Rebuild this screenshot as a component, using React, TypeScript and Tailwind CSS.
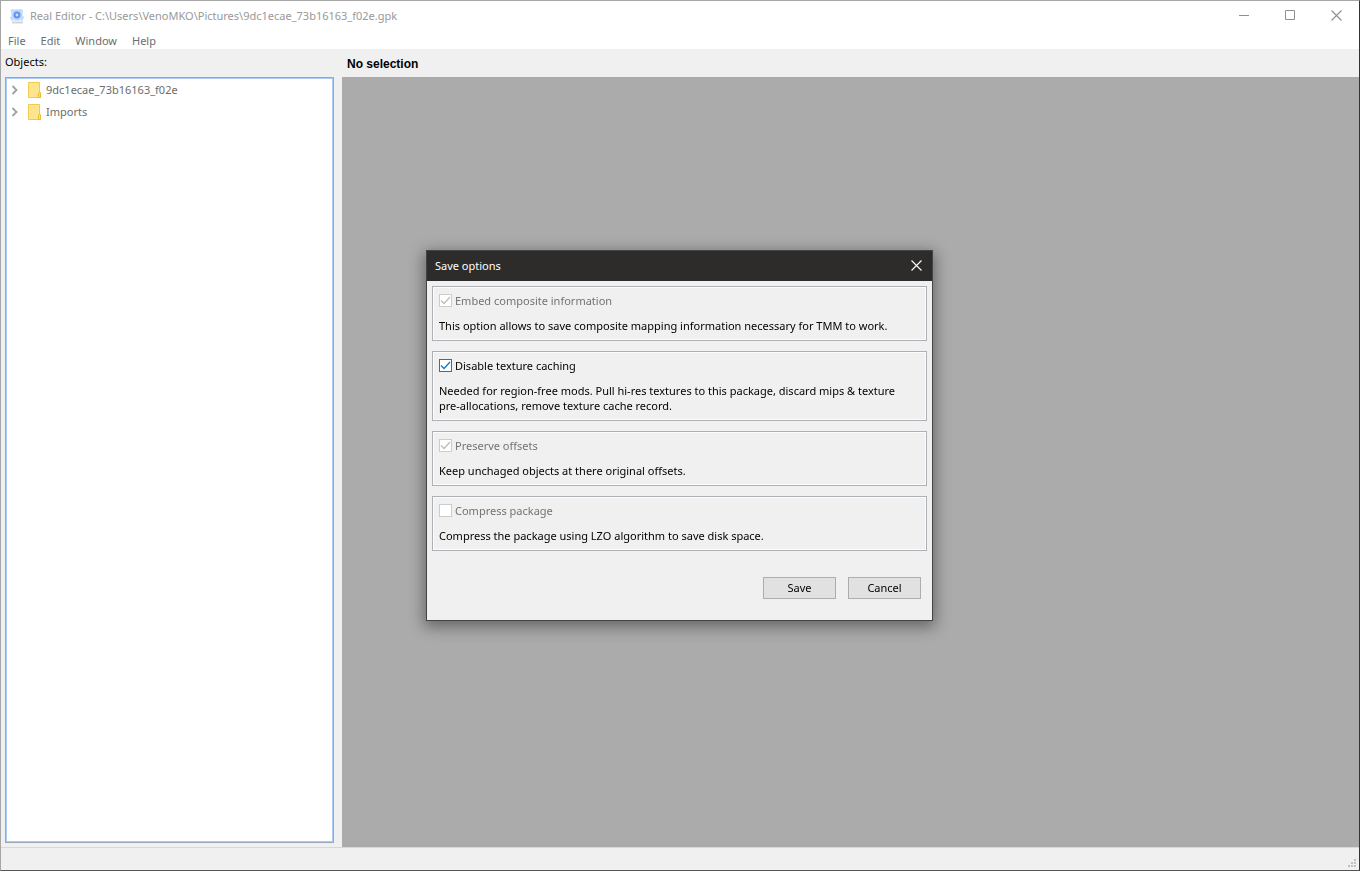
import { useState } from "react";

type SaveOption = {
  id: string;
  label: string;
  description: string;
  checked: boolean;
  disabled: boolean;
};

const initialOptions: SaveOption[] = [
  {
    id: "embed",
    label: "Embed composite information",
    description: "This option allows to save composite mapping information necessary for TMM to work.",
    checked: true,
    disabled: true,
  },
  {
    id: "caching",
    label: "Disable texture caching",
    description:
      "Needed for region-free mods. Pull hi-res textures to this package, discard mips & texture pre-allocations, remove texture cache record.",
    checked: true,
    disabled: false,
  },
  {
    id: "offsets",
    label: "Preserve offsets",
    description: "Keep unchaged objects at there original offsets.",
    checked: true,
    disabled: true,
  },
  {
    id: "compress",
    label: "Compress package",
    description: "Compress the package using LZO algorithm to save disk space.",
    checked: false,
    disabled: true,
  },
];

const menus = ["File", "Edit", "Window", "Help"];
const treeItems = ["9dc1ecae_73b16163_f02e", "Imports"];

function AppIcon() {
  return (
    <svg width="16" height="16" viewBox="0 0 16 16" aria-hidden="true">
      <rect x="2" y="1" width="12" height="12" rx="3" fill="#dbeafd" />
      <path d="M1.500 3.500l3-2M11 1.500l3 2M1.500 9l2 3.500M14.500 8.500l-2 4" stroke="#b3d4fa" strokeWidth="1.500" />
      <path d="M3 14.500h11" stroke="#d3d5da" strokeWidth="2" />
      <circle cx="8" cy="7" r="5" fill="#abcbfb" />
      <circle cx="8" cy="7" r="3.200" fill="#5f92ef" />
      <circle cx="8" cy="7" r="1.400" fill="#cfe0ff" />
    </svg>
  );
}

function CloseIcon() {
  return (
    <svg width="11" height="11" viewBox="0 0 11 11" fill="none" stroke="currentColor" aria-hidden="true">
      <path d="M.5.5l10 10M10.5.5l-10 10" strokeWidth="1.1" />
    </svg>
  );
}

function FolderIcon() {
  return (
    <svg width="13" height="16" viewBox="0 0 13 16" aria-hidden="true">
      <path d="M.5.5h11v9.500l1 1v4.500H.5z" fill="#ffe48f" stroke="#f0cb4e" />
      <path d="M10.500 15.500v-4l1-1.500 1 1.500v4z" fill="#ffe072" stroke="#ebbd2d" />
    </svg>
  );
}

function OptionGroup({ option, onToggle }: { option: SaveOption; onToggle: () => void }) {
  return (
    <div className="flex flex-col gap-[10px] border border-[#adb0b5] pt-[6px] pr-4 pb-[7px] pl-[6px] shadow-[inset_0_0_0_1px_#fcfcfc]">
      <label
        htmlFor={option.id}
        className={`flex h-[15px] items-center gap-[3px] ${option.disabled ? "text-[#737373]" : "text-black"}`}
      >
        <span className="grid h-[13px] w-[13px] shrink-0">
          <input
            id={option.id}
            type="checkbox"
            checked={option.checked}
            disabled={option.disabled}
            onChange={onToggle}
            className="peer col-start-1 row-start-1 h-[13px] w-[13px] appearance-none border border-[#0f78d4] bg-white disabled:border-[#cccccc]"
          />
          <svg
            viewBox="0 0 13 13"
            aria-hidden="true"
            className="pointer-events-none invisible col-start-1 row-start-1 h-[13px] w-[13px] text-[#0f78d4] peer-checked:visible peer-disabled:text-[#bdbdbd]"
          >
            <path d="M2 6.500l3 3 6-6.500" fill="none" stroke="currentColor" strokeWidth="1.300" />
          </svg>
        </span>
        {option.label}
      </label>
      <p>{option.description}</p>
    </div>
  );
}

function SaveDialog() {
  const [options, setOptions] = useState(initialOptions);
  const toggle = (id: string) =>
    setOptions((all) => all.map((o) => (o.id === id ? { ...o, checked: !o.checked } : o)));

  return (
    <div className="fixed inset-0 flex items-center justify-center pr-px">
      <section
        role="dialog"
        aria-label="Save options"
        className="w-[507px] border border-[#444444] bg-[#f0f0f0] text-black shadow-[0_4px_14px_2px_rgba(0,0,0,0.4)]"
      >
        <header className="flex h-[30px] items-center justify-between bg-[#2d2c2b] pb-px pl-2 text-white">
          <h2>Save options</h2>
          <button type="button" aria-label="Close dialog" className="flex h-[29px] w-[31px] items-center justify-center">
            <CloseIcon />
          </button>
        </header>
        <div className="flex flex-col gap-[10px] p-[5px]">
          {options.map((option) => (
            <OptionGroup key={option.id} option={option} onToggle={() => toggle(option.id)} />
          ))}
        </div>
        <footer className="flex justify-end gap-3 px-[11px] pt-[21px] pb-[21px]">
          <button type="button" className="h-[22px] w-[73px] border border-[#adadad] bg-[#e1e1e1] pb-px">
            Save
          </button>
          <button type="button" className="h-[22px] w-[73px] border border-[#adadad] bg-[#e1e1e1] pb-px">
            Cancel
          </button>
        </footer>
      </section>
    </div>
  );
}

export default function App() {
  return (
    <div className="flex min-h-screen flex-col border border-t-[#a6a6a6] border-r-[#333333] border-b-[#555555] border-l-[#a6a6a6] bg-[#f0f0f0] font-['Noto_Sans','Open_Sans',sans-serif] text-[11px] leading-[15px] text-[#6d6d6d]">
      <header className="flex h-[29px] items-center bg-white pl-2">
        <AppIcon />
        <h1 className="ml-[5px] flex-1 text-[#999999]">
          Real Editor - C:\Users\VenoMKO\Pictures\9dc1ecae_73b16163_f02e.gpk
        </h1>
        <div className="flex text-[#8f8f8f]">
          <button type="button" aria-label="Minimize" className="flex h-[29px] w-[46px] items-center justify-center">
            <svg width="11" height="11" viewBox="0 0 11 11" aria-hidden="true">
              <path d="M0 5.500h10" stroke="currentColor" />
            </svg>
          </button>
          <button type="button" aria-label="Maximize" className="flex h-[29px] w-[46px] items-center justify-center">
            <svg width="11" height="11" viewBox="0 0 11 11" aria-hidden="true">
              <path d="M.5.5h9v9h-9z" fill="none" stroke="currentColor" />
            </svg>
          </button>
          <button type="button" aria-label="Close" className="flex h-[29px] w-[46px] items-center justify-center">
            <CloseIcon />
          </button>
        </div>
      </header>

      <nav className="flex h-[19px] items-center gap-[15px] bg-white pt-px pl-[7px]">
        {menus.map((name) => (
          <button key={name} type="button">
            {name}
          </button>
        ))}
      </nav>

      <main className="flex flex-1">
        <aside className="flex w-[341px] shrink-0 flex-col pr-2 pb-1 pl-1">
          <h2 className="h-[28px] pt-[5px] text-black">Objects:</h2>
          <ul className="flex-1 border border-[#9aa7b9] bg-white pt-px shadow-[inset_0_0_0_1px_#a9cbf5]">
            {treeItems.map((name) => (
              <li key={name}>
                <button type="button" className="flex h-[22px] w-full items-center pb-px pl-[5px] text-left">
                  <svg width="8" height="10" viewBox="0 0 8 10" aria-hidden="true">
                    <path d="M1.500 1l4 4-4 4" fill="none" stroke="#a0a0a0" strokeWidth="1.800" />
                  </svg>
                  <span className="mr-[5px] ml-[9px]">
                    <FolderIcon />
                  </span>
                  {name}
                </button>
              </li>
            ))}
          </ul>
        </aside>
        <section className="flex min-w-0 flex-1 flex-col">
          <h2 className="h-[28px] pt-2 pl-[5px] font-['Liberation_Sans',Arial,sans-serif] text-[12px] font-bold text-black">
            No selection
          </h2>
          <div className="flex-1 bg-[#ababab]" />
        </section>
      </main>

      <footer className="flex h-[23px] items-end justify-end border-t border-[#d7d7d7] pr-[2px] pb-[2px]">
        <svg width="9" height="9" viewBox="0 0 9 9" fill="#bfbfbf" aria-hidden="true">
          <path d="M6 0h2v2H6zM3 3h2v2H3zM6 3h2v2H6zM0 6h2v2H0zM3 6h2v2H3zM6 6h2v2H6z" />
        </svg>
      </footer>

      <SaveDialog />
    </div>
  );
}
